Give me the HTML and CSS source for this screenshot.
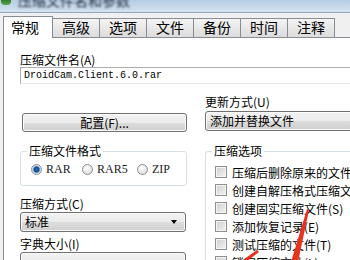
FILE: index.html
```html
<!DOCTYPE html>
<html lang="zh-CN">
<head>
    <meta charset="UTF-8">
    <title>压缩文件名和参数</title>
    <link rel="stylesheet" href="styles.css">
</head>
<body>
    <div class="titlebar">
        <span class="app-icon"></span>
        <span class="title">压缩文件名和参数</span>
    </div>

    <!-- Tabs -->
    <div class="tabs">
        <div class="tab active">常规</div>
        <div class="tab">高级</div>
        <div class="tab">选项</div>
        <div class="tab">文件</div>
        <div class="tab">备份</div>
        <div class="tab">时间</div>
        <div class="tab">注释</div>
    </div>

    <div class="panel">
        <div class="label">压缩文件名(A)</div>
        <div class="textbox">DroidCam.Client.6.0.rar</div>

        <div class="columns">
            <div class="col-left">
                <div class="btn">配置(F)...</div>

                <fieldset class="group">
                    <legend>压缩文件格式</legend>
                    <div class="radio-row">
                        <div class="radio-item"><span class="radio checked"></span>RAR</div>
                        <div class="radio-item"><span class="radio"></span>RAR5</div>
                        <div class="radio-item"><span class="radio"></span>ZIP</div>
                    </div>
                </fieldset>

                <div class="label gap">压缩方式(C)</div>
                <div class="combo">标准<span class="arrow"></span></div>
                <div class="label gap">字典大小(I)</div>
                <div class="combo"><span class="arrow"></span></div>
            </div>

            <div class="col-right">
                <div class="label">更新方式(U)</div>
                <div class="combo wide">添加并替换文件</div>

                <fieldset class="group options">
                    <legend>压缩选项</legend>
                    <div class="check-row"><span class="checkbox"></span>压缩后删除原来的文件</div>
                    <div class="check-row"><span class="checkbox"></span>创建自解压格式压缩文件</div>
                    <div class="check-row"><span class="checkbox"></span>创建固实压缩文件(S)</div>
                    <div class="check-row"><span class="checkbox"></span>添加恢复记录(E)</div>
                    <div class="check-row"><span class="checkbox"></span>测试压缩的文件(T)</div>
                    <div class="check-row"><span class="checkbox"></span>锁定压缩文件(L)</div>
                </fieldset>
            </div>
        </div>
    </div>

    <!-- red arrow drawn over the screenshot -->
    <svg class="annotation" width="350" height="260" viewBox="0 0 350 260">
        <polygon points="307,209 309,210 298,262 291,262" fill="#e8321e"/>
        <polygon points="257,250 259,252 246,262 240,262" fill="#e8321e"/>
    </svg>
</body>
</html>
```

FILE: styles.css
```css
* {
    box-sizing: border-box;
}

body {
    margin: 0;
    width: 350px;
    height: 260px;
    overflow: hidden;
    position: relative;
    background-color: #f0f0f0;
    color: #000;
    font-family: "Noto Sans CJK SC", sans-serif;
    font-size: 12px;
}

.titlebar {
    height: 13px;
    display: flex;
    overflow: hidden;
    background: linear-gradient(#b7cce2, #d4e2f0);
    border-bottom: 1px solid #93a5b9;
}

.app-icon {
    width: 10px;
    height: 5px;
    margin-left: 1px;
    background: linear-gradient(#2f7a2c, #5aa84f);
    border-radius: 0 0 4px 4px;
}

.title {
    margin-top: -8px;
    margin-left: 7px;
    font-size: 14px;
    line-height: 16px;
    color: #1d2c3d;
    filter: blur(0.9px);
}

.tabs {
    display: flex;
    align-items: flex-end;
    height: 24px;
    padding-left: 3px;
}

.tab {
    width: 48px;
    height: 19px;
    margin-left: -1px;
    border: 1px solid #898c95;
    border-bottom: none;
    background: linear-gradient(#f4f4f4, #e8e8e8 50%, #dcdcdc);
    font-size: 14px;
    line-height: 17px;
    text-align: center;
}

.tab.active {
    width: 50px;
    height: 22px;
    margin-left: 0;
    margin-bottom: -1px;
    padding-right: 6px;
    background: #fff;
    position: relative;
    z-index: 1;
    line-height: 20px;
}

.panel {
    height: 230px;
    margin-left: 3px;
    padding: 15px 0 0 16px;
    background-color: #fff;
    border-top: 1px solid #898c95;
    border-left: 1px solid #898c95;
}

.label {
    line-height: 14px;
    white-space: nowrap;
}

.label.gap {
    margin-top: 11px;
}

.label.gap ~ .label.gap {
    margin-top: 5px;
}

.textbox {
    width: 345px;
    height: 17px;
    padding-left: 3px;
    border: 1px solid #abadb3;
    border-right-color: #dbdfe6;
    border-bottom-color: #e3e9ef;
    font-family: "Liberation Mono", monospace;
    font-size: 10px;
    line-height: 15px;
}

.columns {
    display: flex;
    gap: 18px;
    margin-top: 11px;
}

.col-left {
    width: 167px;
    flex-shrink: 0;
}

.col-right {
    width: 170px;
    flex-shrink: 0;
}

.btn {
    width: 165px;
    height: 19px;
    margin: 18px 0 0 2px;
    border: 1px solid #707070;
    border-radius: 3px;
    background: linear-gradient(#f2f2f2, #ebebeb 50%, #dddddd 51%, #cfcfcf);
    box-shadow: inset 0 0 0 1px #fcfcfc;
    text-align: center;
    line-height: 17px;
}

.combo {
    position: relative;
    width: 166px;
    height: 20px;
    margin-top: 1px;
    padding-left: 4px;
    border: 1px solid #707070;
    border-radius: 3px;
    background: linear-gradient(#f2f2f2, #ebebeb 50%, #dddddd 51%, #cfcfcf);
    box-shadow: inset 0 0 0 1px #fafafa;
    line-height: 18px;
    white-space: nowrap;
}

.combo.wide {
    width: 170px;
    margin-top: 2px;
}

.arrow {
    position: absolute;
    right: 8px;
    top: 7px;
    width: 0;
    height: 0;
    border-left: 3.5px solid transparent;
    border-right: 3.5px solid transparent;
    border-top: 4px solid #000;
}

.group {
    margin: 12px 0 0 0;
    padding: 0 0 9px 6px;
    border: 1px solid #d5dfe5;
    border-radius: 3px;
    min-width: 0;
}

.group legend {
    padding: 0 2px;
    line-height: 14px;
}

.options {
    margin-top: 13px;
    padding-bottom: 0;
    border-right: none;
    height: 140px;
}

.radio-row {
    display: grid;
    grid-template-columns: 51px 55px auto;
    margin: 4px 0 0 4px;
    line-height: 14px;
}

.radio-item {
    display: flex;
    align-items: center;
    gap: 4px;
    font-family: "Liberation Serif", serif;
    font-size: 12px;
    color: #1a1a1a;
}

.radio {
    width: 11px;
    height: 11px;
    border-radius: 50%;
    border: 1px solid #8e8f8f;
    background: radial-gradient(circle at 40% 35%, #ffffff, #e4e4e4 60%, #cfcfcf);
}

.radio.checked {
    background: radial-gradient(circle, #2c6fb5 0, #0f4a86 2.5px, #9ec3e6 3.5px, #e8e8e8 4.5px);
}

.check-row {
    display: flex;
    align-items: center;
    gap: 5px;
    height: 18px;
    margin-left: 3px;
    white-space: nowrap;
}

.check-row:first-of-type {
    margin-top: 5px;
}

.checkbox {
    width: 12px;
    height: 12px;
    flex-shrink: 0;
    border: 1px solid #8f8f8f;
    background: linear-gradient(135deg, #cfcfcf, #f2f2f2);
    box-shadow: inset 0 0 0 1px #f4f4f4;
}

.annotation {
    position: absolute;
    left: 0;
    top: 0;
    pointer-events: none;
}
```
